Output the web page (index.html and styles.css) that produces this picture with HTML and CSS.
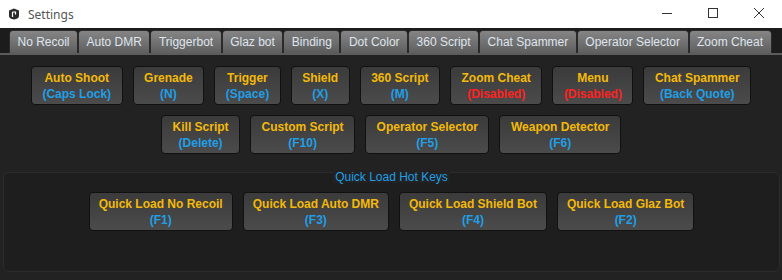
FILE: index.html
```html
<!DOCTYPE html>
<html lang="en">

<head>
    <meta charset="UTF-8">
    <title>Settings</title>
    <link rel="stylesheet" href="styles.css">
</head>

<body>
    <div class="titlebar">
        <svg class="app-icon" width="12" height="12" viewBox="0 0 12 12">
            <path d="M6 0.5 L11 2.5 L11 8 Q11 10.5 6 11.5 Q1 10.5 1 8 L1 2.5 Z" fill="#2b2b2b"/>
            <path d="M4.5 4 L7.5 4 L7.5 6.5 M4.5 4 L4.5 9" stroke="#fff" stroke-width="1.2" fill="none"/>
        </svg>
        <span class="title">Settings</span>
        <div class="controls">
            <svg width="46" height="28" viewBox="0 0 46 28"><path d="M18 13.5 H28" stroke="#333" stroke-width="1"/></svg>
            <svg width="46" height="28" viewBox="0 0 46 28"><rect x="18.5" y="8.5" width="9" height="9" stroke="#333" fill="none"/></svg>
            <svg width="46" height="28" viewBox="0 0 46 28"><path d="M18 8 L28 18 M28 8 L18 18" stroke="#333" stroke-width="1"/></svg>
        </div>
    </div>

    <div class="window">
        <div class="tabs">
            <div class="tab">No Recoil</div>
            <div class="tab">Auto DMR</div>
            <div class="tab">Triggerbot</div>
            <div class="tab">Glaz bot</div>
            <div class="tab active">Binding</div>
            <div class="tab">Dot Color</div>
            <div class="tab">360 Script</div>
            <div class="tab">Chat Spammer</div>
            <div class="tab">Operator Selector</div>
            <div class="tab">Zoom Cheat</div>
        </div>

        <div class="panel">
            <div class="row">
                <div class="key-btn"><span class="name">Auto Shoot</span><span class="key">(Caps Lock)</span></div>
                <div class="key-btn"><span class="name">Grenade</span><span class="key">(N)</span></div>
                <div class="key-btn"><span class="name">Trigger</span><span class="key">(Space)</span></div>
                <div class="key-btn"><span class="name">Shield</span><span class="key">(X)</span></div>
                <div class="key-btn"><span class="name">360 Script</span><span class="key">(M)</span></div>
                <div class="key-btn"><span class="name">Zoom Cheat</span><span class="key off">(Disabled)</span></div>
                <div class="key-btn"><span class="name">Menu</span><span class="key off">(Disabled)</span></div>
                <div class="key-btn"><span class="name">Chat Spammer</span><span class="key">(Back Quote)</span></div>
            </div>
            <div class="row">
                <div class="key-btn"><span class="name">Kill Script</span><span class="key">(Delete)</span></div>
                <div class="key-btn"><span class="name">Custom Script</span><span class="key">(F10)</span></div>
                <div class="key-btn"><span class="name">Operator Selector</span><span class="key">(F5)</span></div>
                <div class="key-btn"><span class="name">Weapon Detector</span><span class="key">(F6)</span></div>
            </div>

            <div class="group">
                <div class="group-title"><span>Quick Load Hot Keys</span></div>
                <div class="row">
                    <div class="key-btn wide"><span class="name">Quick Load No Recoil</span><span class="key">(F1)</span></div>
                    <div class="key-btn wide"><span class="name">Quick Load Auto DMR</span><span class="key">(F3)</span></div>
                    <div class="key-btn wide"><span class="name">Quick Load Shield Bot</span><span class="key">(F4)</span></div>
                    <div class="key-btn wide"><span class="name">Quick Load Glaz Bot</span><span class="key">(F2)</span></div>
                </div>
            </div>
        </div>
    </div>
</body>
</html>
```

FILE: styles.css
```css
/* Okno ustawień - ciemny motyw */
body {
    margin: 0;
    width: 782px;
    height: 280px;
    overflow: hidden;
    background-color: #fff;
    font-family: "Liberation Sans", Arial, sans-serif;
}
.titlebar {
    height: 28px;
    display: flex;
    align-items: center;
    background-color: #fff;
}
.app-icon {
    margin-left: 8px;
}
.title {
    margin-left: 8px;
    font-family: "Noto Sans", "Open Sans", sans-serif;
    font-size: 12px;
    color: #555;
}
.controls {
    margin-left: auto;
    display: flex;
}
.window {
    height: 252px;
    background-color: #1c1c1c;
    display: flex;
    flex-direction: column;
}
.tabs {
    display: flex;
    padding: 2px 0 0 9px;
    height: 23px;
    border-bottom: 2px solid #5c5c5c;
}
.tab {
    padding: 0 7.5px;
    font-size: 12px;
    line-height: 22px;
    color: #dfe5ee;
    background: linear-gradient(#858585, #5f5f5f);
    border: 1px solid #2a2a2a;
    border-bottom: none;
    border-radius: 4px 4px 0 0;
}
.tab.active {
    background: linear-gradient(#7a7a7a, #6c6c6c 60%, #5a5a5a);
}
.panel {
    flex: 1;
    background-color: #222;
    padding-top: 11px;
    display: flex;
    flex-direction: column;
    gap: 10px;
}
.row {
    display: flex;
    justify-content: center;
    gap: 10px;
}
.key-btn {
    height: 37px;
    padding: 0 10.5px;
    display: flex;
    flex-direction: column;
    align-items: center;
    justify-content: center;
    font-size: 12px;
    font-weight: bold;
    line-height: 16px;
    background: linear-gradient(#3b3b3b, #4b4b4b);
    border: 1px solid #111;
    border-radius: 4px;
}
.key-btn.wide {
    padding: 0 9px;
}
.name {
    color: #f4b907;
}
.key {
    color: #1f9fe6;
}
.key.off {
    color: #ff2121;
}
.group {
    margin: 8px 2px 0 3px;
    height: 98px;
    background-color: #1e1e1e;
    border: 1px solid #2c2c2c;
    border-radius: 6px;
}
.group-title {
    display: flex;
    justify-content: center;
    margin-top: -2px;
    margin-bottom: 9px;
}
.group-title span {
    padding: 0 2px;
    font-size: 12px;
    line-height: 12px;
    height: 12px;
    color: #1f9fe6;
    background-color: #222;
}
```
